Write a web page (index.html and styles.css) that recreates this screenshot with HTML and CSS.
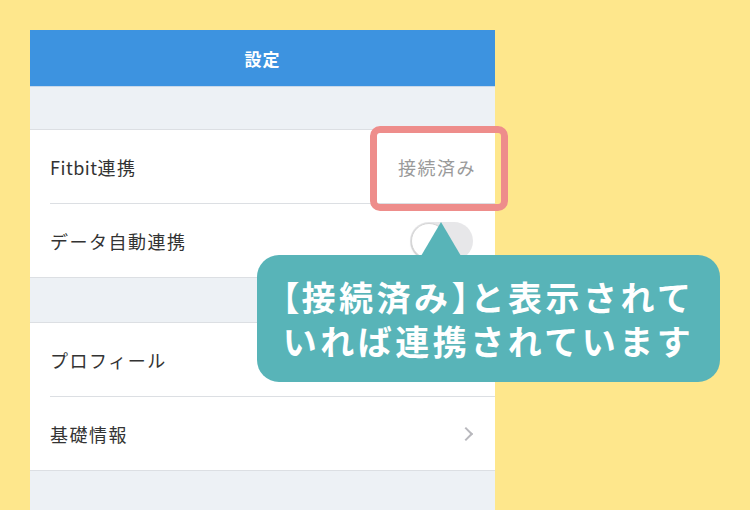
FILE: index.html
```html
<!DOCTYPE html>
<html lang="ja">
<head>
    <meta charset="UTF-8">
    <meta name="viewport" content="width=device-width, initial-scale=1.0">
    <title>設定</title>
    <link rel="stylesheet" href="styles.css">
</head>
<body>
    <div class="stage">
        <div class="screen">
            <div class="nav-bar">設定</div>
            <div class="gap"></div>
            <div class="group">
                <div class="row">
                    <span class="label"><span class="latin">Fitbit</span>連携</span>
                    <span class="value">接続済み</span>
                </div>
                <div class="row">
                    <span class="label">データ自動連携</span>
                    <span class="switch"><span class="knob"></span></span>
                </div>
            </div>
            <div class="gap gap-2"></div>
            <div class="group">
                <div class="row">
                    <span class="label">プロフィール</span>
                    <span class="chevron"></span>
                </div>
                <div class="row">
                    <span class="label">基礎情報</span>
                    <span class="chevron"></span>
                </div>
            </div>
        </div>

        <div class="highlight"></div>
        <div class="bubble">
            <p><span class="bracket">【</span>接続済み<span class="bracket">】</span>と表示されて</p>
            <p>いれば連携されています</p>
        </div>
    </div>
</body>
</html>
```

FILE: styles.css
```css
*{
    box-sizing: border-box;
}
body{
    margin: 0;
    background: #fee78c;
    font-family: "Noto Sans CJK JP", "Noto Sans", sans-serif;
}
.stage{
    position: relative;
    width: 750px;
    height: 510px;
    overflow: hidden;
    padding: 30px 0 0 30px;
}
.screen{
    width: 465px;
    height: 480px;
    background: #edf1f5;
}
.nav-bar{
    height: 57px;
    background: #3d93e0;
    border-bottom: 1px solid #c9d9ea;
    color: #fff;
    font-size: 17px;
    font-weight: bold;
    display: flex;
    align-items: center;
    justify-content: center;
    letter-spacing: 1px;
}
.gap{
    height: 42px;
}
.gap-2{
    height: 44px;
}
.group{
    background: #fff;
    border-top: 1px solid #dcdfe3;
    border-bottom: 1px solid #dcdfe3;
}
.row{
    height: 74px;
    margin-left: 20px;
    padding-right: 20px;
    display: flex;
    align-items: center;
    justify-content: space-between;
    border-bottom: 1px solid #dcdfe3;
}
.row:last-child{
    border-bottom: none;
    height: 73px;
}
.label{
    font-size: 18px;
    letter-spacing: 1.5px;
    color: #333;
}
.label .latin{
    letter-spacing: 0.5px;
}
.value{
    font-size: 18px;
    letter-spacing: 1.5px;
    color: #9a9a9a;
    margin-right: -1px;
}
.switch{
    width: 63px;
    height: 38px;
    border-radius: 19px;
    background: #e7e7e9;
    margin-right: 2px;
    padding: 1px;
}
.knob{
    display: block;
    width: 36px;
    height: 36px;
    border-radius: 50%;
    background: #fff;
    border: 1px solid #d6d6d6;
    box-shadow: 0 1px 2px rgba(0, 0, 0, 0.15);
}
.chevron{
    width: 10px;
    height: 10px;
    border-top: 2px solid #b8b8bd;
    border-right: 2px solid #b8b8bd;
    transform: rotate(45deg);
    margin-right: 4px;
}
.highlight{
    position: absolute;
    left: 370px;
    top: 126px;
    width: 138px;
    height: 85px;
    border: 7px solid #ee8d8b;
    border-radius: 10px;
}
.bubble{
    position: absolute;
    left: 257px;
    top: 255px;
    width: 463px;
    height: 127px;
    background: #58b4b8;
    border-radius: 22px;
    display: flex;
    flex-direction: column;
    justify-content: center;
    align-items: center;
    color: #fff;
    font-size: 34px;
    font-weight: bold;
    line-height: 44px;
    letter-spacing: 3.5px;
}
.bubble::before{
    content: "";
    position: absolute;
    left: 164px;
    top: -33px;
    border-left: 20px solid transparent;
    border-right: 20px solid transparent;
    border-bottom: 34px solid #58b4b8;
}
.bubble p{
    margin: 0;
    white-space: nowrap;
}
.bracket{
    font-feature-settings: "halt";
    letter-spacing: 2px;
}
```
